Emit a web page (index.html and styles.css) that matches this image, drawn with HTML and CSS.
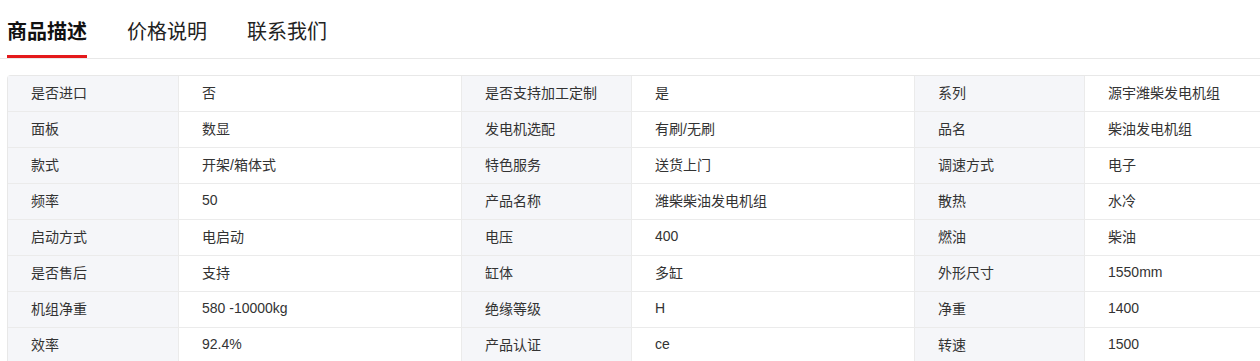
FILE: index.html
```html
<!DOCTYPE html>
<html lang="zh">
<head>
<meta charset="utf-8">
<link rel="stylesheet" href="styles.css">
</head>
<body>
<div class="page">
<div class="tabs">
  <div class="tab active">商品描述</div>
  <div class="tab">价格说明</div>
  <div class="tab">联系我们</div>
</div>
<div class="specs">
  <div class="k">是否进口</div><div class="v">否</div>
  <div class="k">是否支持加工定制</div><div class="v">是</div>
  <div class="k">系列</div><div class="v">源宇潍柴发电机组</div>

  <div class="k">面板</div><div class="v">数显</div>
  <div class="k">发电机选配</div><div class="v">有刷/无刷</div>
  <div class="k">品名</div><div class="v">柴油发电机组</div>

  <div class="k">款式</div><div class="v">开架/箱体式</div>
  <div class="k">特色服务</div><div class="v">送货上门</div>
  <div class="k">调速方式</div><div class="v">电子</div>

  <div class="k">频率</div><div class="v">50</div>
  <div class="k">产品名称</div><div class="v">潍柴柴油发电机组</div>
  <div class="k">散热</div><div class="v">水冷</div>

  <div class="k">启动方式</div><div class="v">电启动</div>
  <div class="k">电压</div><div class="v">400</div>
  <div class="k">燃油</div><div class="v">柴油</div>

  <div class="k">是否售后</div><div class="v">支持</div>
  <div class="k">缸体</div><div class="v">多缸</div>
  <div class="k">外形尺寸</div><div class="v">1550mm</div>

  <div class="k">机组净重</div><div class="v">580 -10000kg</div>
  <div class="k">绝缘等级</div><div class="v">H</div>
  <div class="k">净重</div><div class="v">1400</div>

  <div class="k">效率</div><div class="v">92.4%</div>
  <div class="k">产品认证</div><div class="v">ce</div>
  <div class="k">转速</div><div class="v">1500</div>
</div>
</div>
</body>
</html>
```

FILE: styles.css
```css
html, body {
  margin: 0;
  padding: 0;
  background: #ffffff;
}
body {
  font-family: "Liberation Sans", "Noto Sans CJK SC", sans-serif;
  color: #333333;
}
.page {
  width: 1260px;
  height: 361px;
  overflow: hidden;
}
.tabs {
  display: flex;
  gap: 40px;
  padding-left: 7px;
  height: 58px;
  border-bottom: 1px solid #e8e8e8;
}
.tab {
  font-family: "Noto Sans CJK SC", sans-serif;
  font-size: 20px;
  line-height: 20px;
  padding-top: 21px;
  color: #222222;
  box-sizing: border-box;
  height: 58px;
  border-bottom: 3px solid transparent;
}
.tab.active {
  font-weight: 700;
  color: #111111;
  border-bottom-color: #e4191b;
}
.specs {
  margin: 16px 0 0 7px;
  display: grid;
  grid-template-columns: 171px 283px 170px 283px 170px 283px;
  grid-auto-rows: 36px;
  border-top: 1px solid #e8e8e8;
  border-left: 1px solid #e8e8e8;
  border-radius: 4px 0 0 0;
  width: max-content;
  font-size: 14px;
}
.k, .v {
  display: flex;
  align-items: center;
  padding-left: 23px;
  padding-bottom: 4px;
  border-right: 1px solid #ebebeb;
  border-bottom: 1px solid #ebebeb;
  white-space: nowrap;
}
.k {
  background: #f5f6f9;
}
```
